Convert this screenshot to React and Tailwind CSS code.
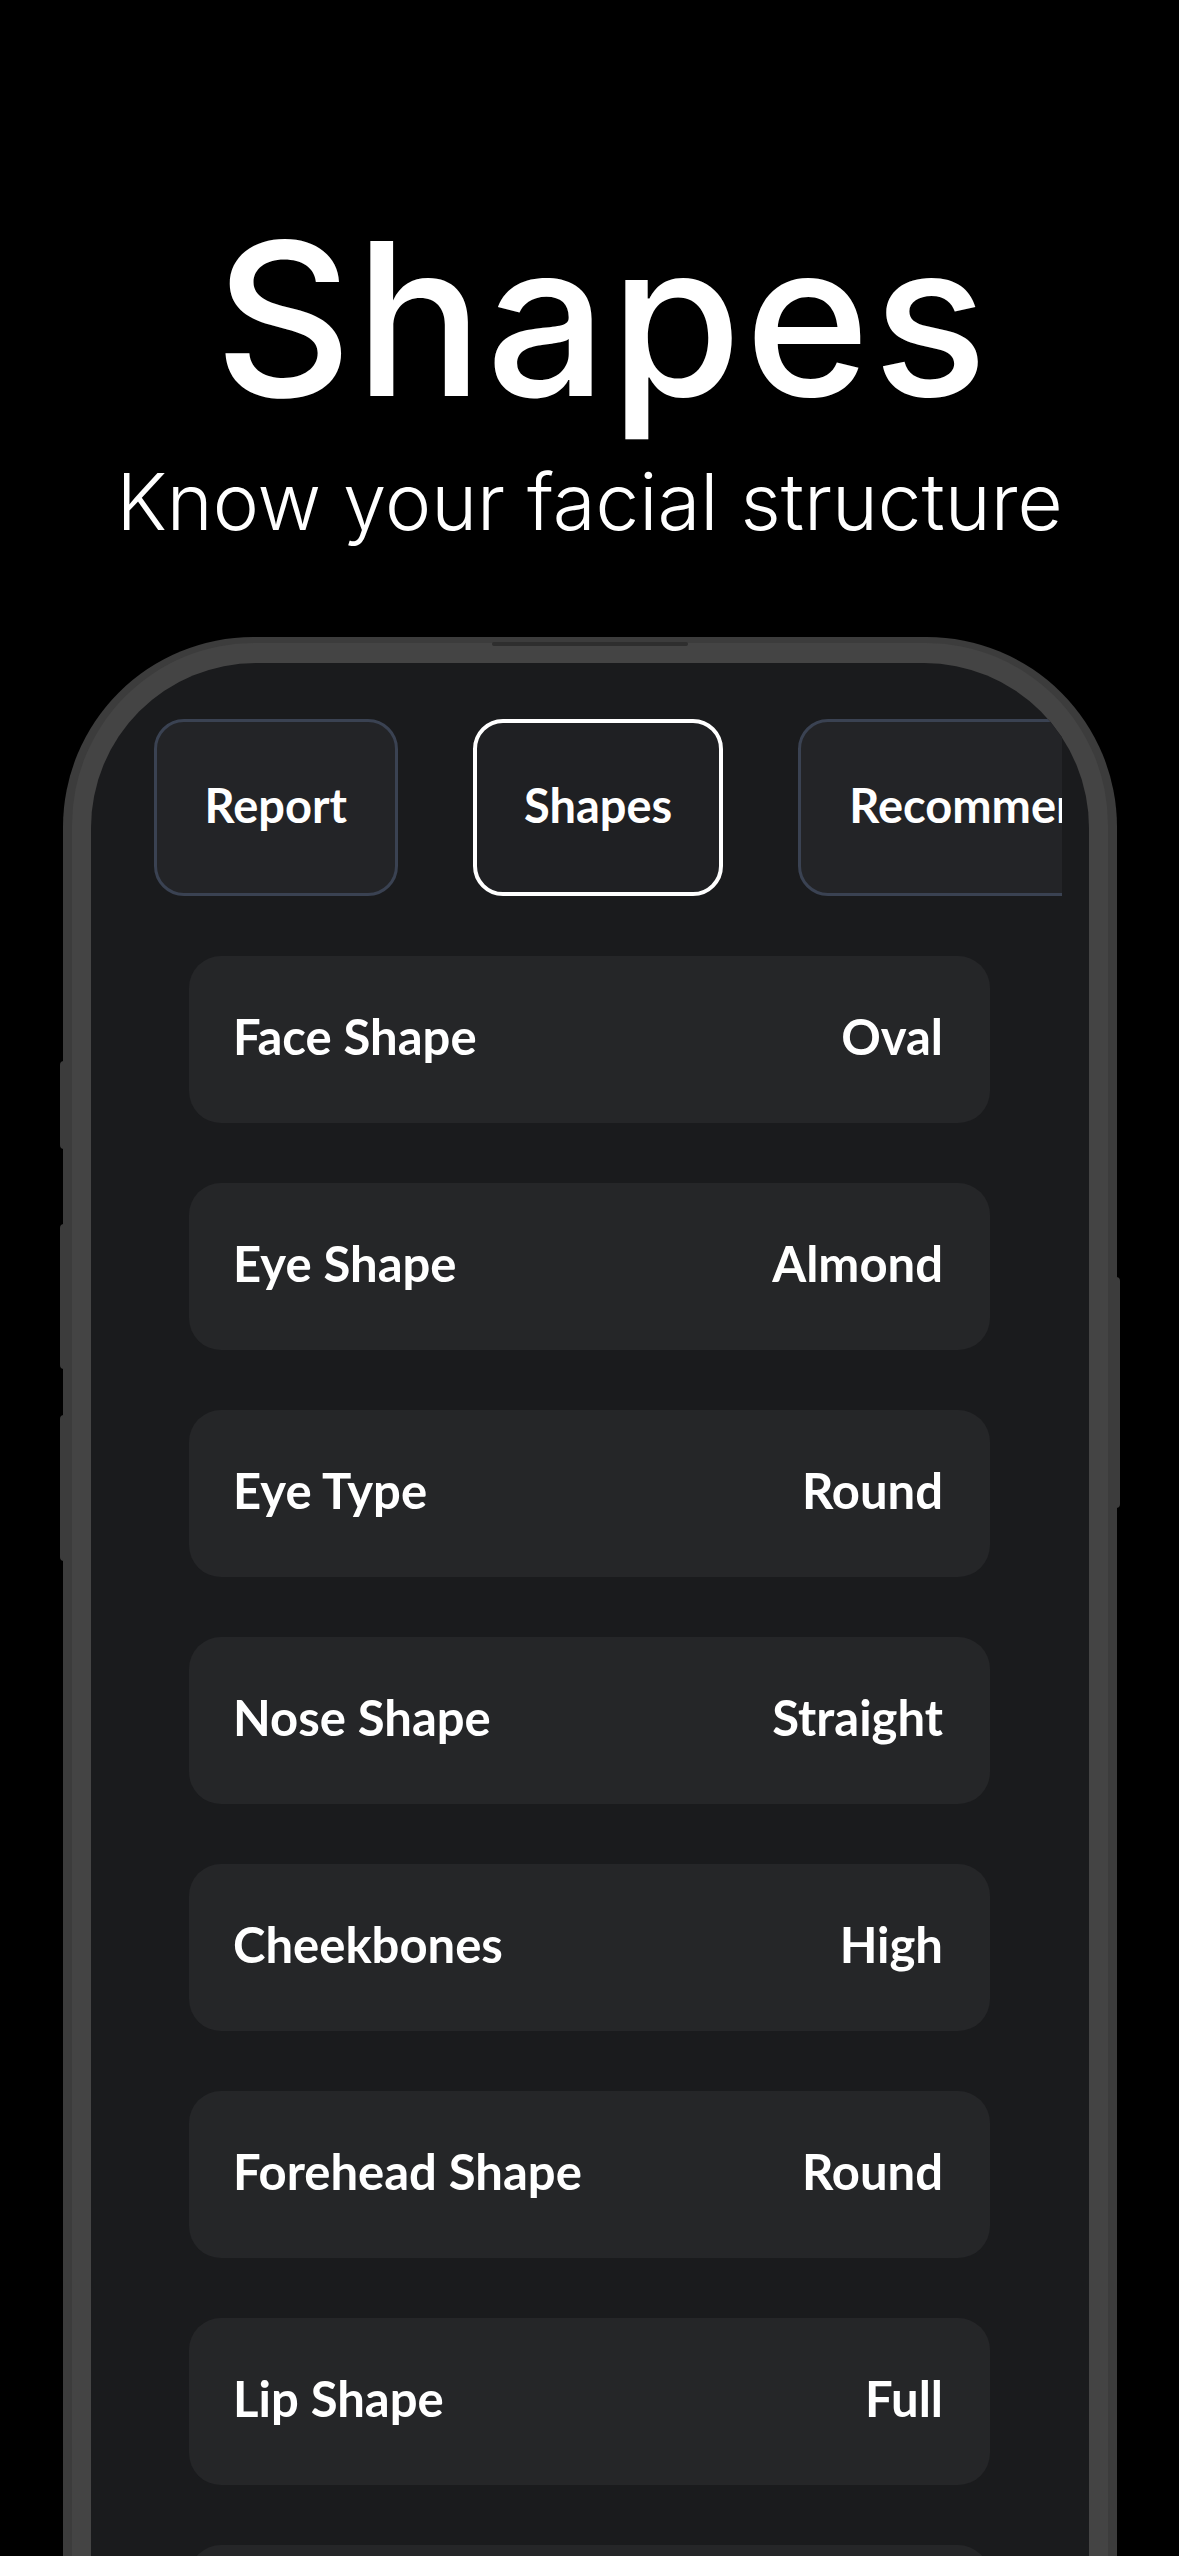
import React from 'react';

const tabs = [
  { label: 'Report', active: false },
  { label: 'Shapes', active: true },
  { label: 'Recommendations', active: false },
];

const shapes = [
  { name: 'Face Shape', value: 'Oval' },
  { name: 'Eye Shape', value: 'Almond' },
  { name: 'Eye Type', value: 'Round' },
  { name: 'Nose Shape', value: 'Straight' },
  { name: 'Cheekbones', value: 'High' },
  { name: 'Forehead Shape', value: 'Round' },
  { name: 'Lip Shape', value: 'Full' },
];

const App = () => {
  return (
    <div className="w-[1179px] h-[2556px] overflow-hidden bg-black flex flex-col items-center">
      {/* Heading */}
      <h1
        className="mt-[212px] pl-[26px] text-[213px] leading-none font-medium text-white tracking-[3px]"
        style={{ fontFamily: 'Inter, sans-serif' }}
      >
        Shapes
      </h1>
      <p
        className="mt-[38px] text-[78px] leading-none font-light text-white"
        style={{ fontFamily: 'Inter, sans-serif' }}
      >
        Know your facial structure
      </p>

      {/* Phone mockup */}
      <div className="relative mt-[96px] w-[1054px] flex-1 rounded-t-[190px] bg-[#3c3c3c] px-[9px] pt-[6px]">
        {/* side buttons */}
        <div className="absolute left-[-3px] top-[424px] w-[6px] h-[88px] rounded-l-[4px] bg-[#3c3c3c]"></div>
        <div className="absolute left-[-3px] top-[587px] w-[6px] h-[145px] rounded-l-[4px] bg-[#3c3c3c]"></div>
        <div className="absolute left-[-3px] top-[778px] w-[6px] h-[146px] rounded-l-[4px] bg-[#3c3c3c]"></div>
        <div className="absolute right-[-3px] top-[640px] w-[6px] h-[231px] rounded-r-[4px] bg-[#3c3c3c]"></div>
        {/* speaker */}
        <div className="absolute left-[429px] top-[5px] w-[196px] h-[4px] rounded-full bg-[#2e2e2e]"></div>

        <div className="h-full rounded-t-[182px] bg-[#444444] px-[19px] pt-[20px]">
          <div
            className="h-full rounded-t-[165px] bg-[#1a1b1d] overflow-hidden flex flex-col"
            style={{ fontFamily: 'Lato, "Open Sans", sans-serif' }}
          >
            {/* Tabs */}
            <div className="mt-[56px] ml-[63px] mr-[27px] overflow-hidden flex gap-[75px] shrink-0">
              {tabs.map((t) => (
                <div
                  key={t.label}
                  className={
                    t.active
                      ? 'h-[177px] shrink-0 px-[47px] pb-[5px] flex items-center rounded-[30px] border-[4px] border-white bg-[#1f2023]'
                      : 'h-[177px] shrink-0 px-[48px] pb-[5px] flex items-center rounded-[30px] border-[3px] border-[#3a4252] bg-[#232427]'
                  }
                >
                  <span className="text-[47px] font-bold text-white whitespace-nowrap">{t.label}</span>
                </div>
              ))}
            </div>

            {/* Shape cards */}
            <div className="mt-[60px] flex flex-col items-center gap-[60px]">
              {shapes.map((s) => (
                <div
                  key={s.name}
                  className="w-[801px] h-[167px] shrink-0 rounded-[32px] bg-[#252628] pl-[44px] pr-[47px] pb-[5px] flex items-center justify-between"
                >
                  <span className="text-[49px] font-bold text-white">{s.name}</span>
                  <span className="text-[49px] font-bold text-white">{s.value}</span>
                </div>
              ))}
              {/* next card, scrolled below the fold */}
              <div className="w-[801px] h-[167px] shrink-0 rounded-[32px] bg-[#252628]"></div>
            </div>
          </div>
        </div>
      </div>
    </div>
  );
};

export default App;
